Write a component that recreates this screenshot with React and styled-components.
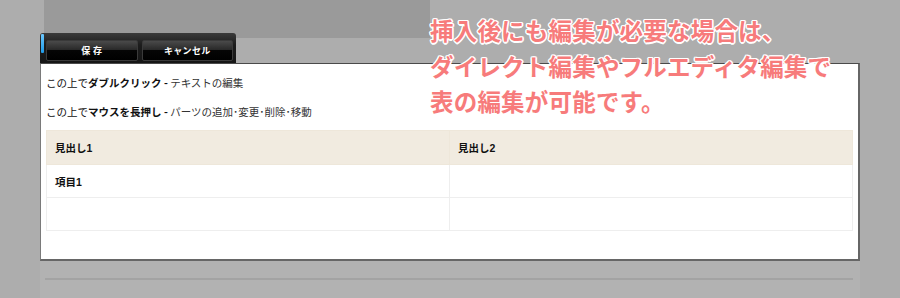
import styled, { createGlobalStyle } from 'styled-components';

const GlobalStyle = createGlobalStyle`
  html, body {
    margin: 0;
    padding: 0;
    background: #adadad;
  }
  body {
    font-family: 'Liberation Sans', 'Noto Sans CJK JP', sans-serif;
  }
`;

function App() {
  return (
    <Screen>
      <GlobalStyle />
      <Stage>
        <TopArea>
          <Backdrop />
          <Toolbar>
            <Marker />
            <ToolButton>保 存</ToolButton>
            <ToolButton>キャンセル</ToolButton>
          </Toolbar>
        </TopArea>
        <Panel>
          <Hint>
            この上で<strong>ダブルクリック -</strong> <span>テキストの編集</span>
          </Hint>
          <Hint>
            この上で<strong>マウスを長押し -</strong> <span>パーツの追加･変更･削除･移動</span>
          </Hint>
          <Table>
            <thead>
              <tr>
                <HeadCell>見出し1</HeadCell>
                <HeadCell>見出し2</HeadCell>
              </tr>
            </thead>
            <tbody>
              <tr>
                <Cell>項目1</Cell>
                <Cell></Cell>
              </tr>
              <tr>
                <Cell></Cell>
                <Cell></Cell>
              </tr>
            </tbody>
          </Table>
        </Panel>
        <Footer>
          <Rule />
        </Footer>
      </Stage>
      <Caption>
        挿入後にも編集が必要な場合は、<br />
        ダイレクト編集やフルエディタ編集で<br />
        表の編集が可能です。
      </Caption>
    </Screen>
  );
}

const Screen = styled.div`
  position: relative;
  width: 900px;
  height: 298px;
  overflow: hidden;
  background: #adadad;
`;

const Stage = styled.div`
  margin-left: 40px;
  width: 820px;
  display: flex;
  flex-direction: column;
`;

const TopArea = styled.div`
  height: 63px;
  display: flex;
  flex-direction: column;
`;

const Backdrop = styled.div`
  margin-left: 4px;
  width: 386px;
  height: 38px;
  background: #9a9a9a;
`;

const Toolbar = styled.div`
  margin-top: -5px;
  width: 196px;
  height: 30px;
  box-sizing: border-box;
  background: linear-gradient(#3a3a3a, #1c1c1c 40%, #151515);
  border-radius: 3px 3px 0 0;
  display: flex;
  align-items: flex-end;
  gap: 4px;
  padding: 0 3px 2px 1px;
  position: relative;
`;

const Marker = styled.div`
  position: absolute;
  left: 1px;
  top: 1px;
  width: 3px;
  height: 19px;
  background: linear-gradient(#6cc8ff, #1e9be8);
  border-radius: 1px;
`;

const ToolButton = styled.div`
  flex: 1;
  height: 21px;
  box-sizing: border-box;
  margin-left: 5px;
  & + & {
    margin-left: 0;
  }
  border: 1px solid #3a3a3a;
  border-radius: 2px;
  background: linear-gradient(#4a4a4a, #2a2a2a 45%, #050505 50%, #000);
  color: #fff;
  font-family: 'Noto Sans CJK JP', sans-serif;
  font-size: 9px;
  font-weight: 700;
  display: flex;
  align-items: center;
  justify-content: center;
  letter-spacing: 0.3px;
`;

const Panel = styled.div`
  height: 198px;
  box-sizing: border-box;
  background: #fff;
  border-top: 1px solid #4a4a4a;
  border-left: 1px solid #7a7a7a;
  border-right: 2px solid #666;
  border-bottom: 2px solid #666;
  padding: 12px 6px 0 5px;
  display: flex;
  flex-direction: column;
`;

const Hint = styled.div`
  font-family: 'Noto Sans CJK JP', sans-serif;
  font-size: 10.5px;
  line-height: 14px;
  color: #111;
  margin-bottom: 15px;
  strong {
    font-weight: 700;
  }
  span {
    color: #333;
  }
`;

const Table = styled.table`
  margin-top: -4px;
  width: 807px;
  border-collapse: collapse;
  table-layout: fixed;
  font-family: 'Liberation Sans', 'Noto Sans CJK JP', sans-serif;
  font-size: 10.5px;
  font-weight: 700;
  color: #111;
`;

const HeadCell = styled.th`
  height: 33px;
  padding: 0 0 0 8px;
  text-align: left;
  background: #f1ebe0;
  border: 1px solid #eee7da;
  font-weight: 700;
`;

const Cell = styled.td`
  height: 32px;
  padding: 0 0 0 8px;
  border: 1px solid #eeeeee;
`;

const Footer = styled.div`
  height: 37px;
  background: #b2b2b2;
  padding: 17px 7px 0 5px;
  box-sizing: border-box;
`;

const Rule = styled.div`
  height: 2px;
  background: #a3a3a3;
`;

const Caption = styled.div`
  position: absolute;
  left: 430px;
  top: 13px;
  font-family: 'Noto Sans CJK JP', sans-serif;
  font-size: 23.5px;
  font-weight: 700;
  line-height: 35.5px;
  letter-spacing: 0.2px;
  color: #f77b7b;
  white-space: nowrap;
  text-shadow:
    1.5px 0 0 #fff, -1.5px 0 0 #fff, 0 1.5px 0 #fff, 0 -1.5px 0 #fff,
    1px 1px 0 #fff, -1px -1px 0 #fff, 1px -1px 0 #fff, -1px 1px 0 #fff;
`;

export default App;
